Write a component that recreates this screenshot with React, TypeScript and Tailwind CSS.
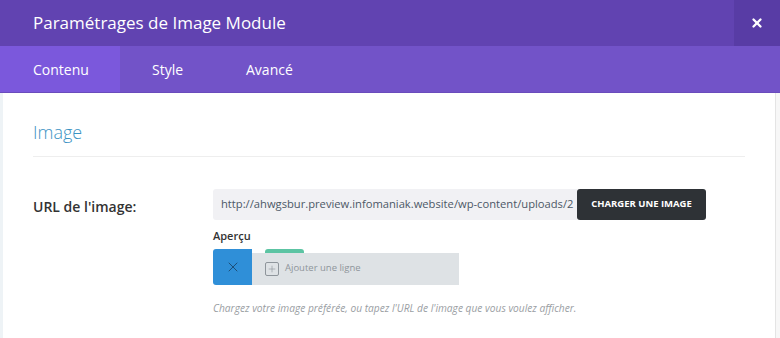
import { X, Plus } from 'lucide-react';

const font = { fontFamily: '"Open Sans", "Noto Sans", sans-serif' };

export default function App() {
  return (
    <div className="h-[338px] w-[780px] overflow-hidden bg-white" style={font}>
      <div className="flex h-[46px] items-stretch bg-[#6143b1]">
        <h1 className="flex flex-1 items-center pl-[33px] text-[17px] text-white">Paramétrages de Image Module</h1>
        <button className="flex w-[46px] items-center justify-center bg-[#583ca5] text-white">
          <X size={14} strokeWidth={4} />
        </button>
      </div>
      <div className="flex h-[47px] items-stretch border-b border-[#6a4cbc] bg-[#7253c8] text-[14px] text-white">
        <div className="flex w-[120px] items-center pl-[33px] bg-[#7b58dc]">Contenu</div>
        <div className="flex w-[94px] items-center pl-[32px]">Style</div>
        <div className="flex items-center pl-[32px]">Avancé</div>
      </div>
      <div className="flex h-[245px]">
        <div className="w-[3px] bg-[#eef3f6]" />
        <div className="flex-1 pl-[30px] pr-[30px]">
          <h2 className="pt-[26px] pb-[10px] text-[18px] font-light text-[#3b93c4]">Image</h2>
          <div className="h-px bg-[#eeeeee]" />
          <div className="mt-[32px] flex">
            <label className="w-[180px] pt-[7px] text-[14px] font-semibold text-[#333]">URL de l'image:</label>
            <div>
              <div className="flex h-[31px]">
                <div className="flex w-[364px] shrink-0 items-center overflow-hidden whitespace-nowrap rounded-l-[3px] bg-[#f1f1f4] pl-[8px] text-[11.2px] text-[#4c5866]">
                  http://ahwgsbur.preview.infomaniak.website/wp-content/uploads/2
                </div>
                <button className="w-[129px] shrink-0 rounded-[3px] bg-[#2e3236] text-[9.5px] font-bold text-white">CHARGER UNE IMAGE</button>
              </div>
              <div className="mt-[8px] text-[11px] font-semibold text-[#333]">Aperçu</div>
              <div className="mt-[4px] flex h-[36px] w-[246px]">
                <div className="flex w-[39px] items-center justify-center rounded-l-[3px] bg-[#2f8fd8] text-[#1d4f78]">
                  <X size={16} strokeWidth={1.5} />
                </div>
                <div className="relative mt-[4px] flex flex-1 items-center bg-[#dee2e5] pl-[13px] text-[9.5px] text-[#8e959b]">
                  <div className="absolute left-[13px] top-[-4px] h-[4px] w-[39px] rounded-t-[3px] bg-[#5cc4a3]" />
                  <span className="mr-[6px] flex h-[14px] w-[14px] items-center justify-center rounded-[2px] border border-[#8e959b]">
                    <Plus size={10} strokeWidth={1.5} />
                  </span>
                  Ajouter une ligne
                </div>
              </div>
              <p className="mt-[16px] text-[10.2px] italic text-[#9a9ea3]">Chargez votre image préférée, ou tapez l'URL de l'image que vous voulez afficher.</p>
            </div>
          </div>
        </div>
        <div className="w-[5px] border-l border-[#e4e4e4] bg-[#f7f7f7]" />
      </div>
    </div>
  );
}
